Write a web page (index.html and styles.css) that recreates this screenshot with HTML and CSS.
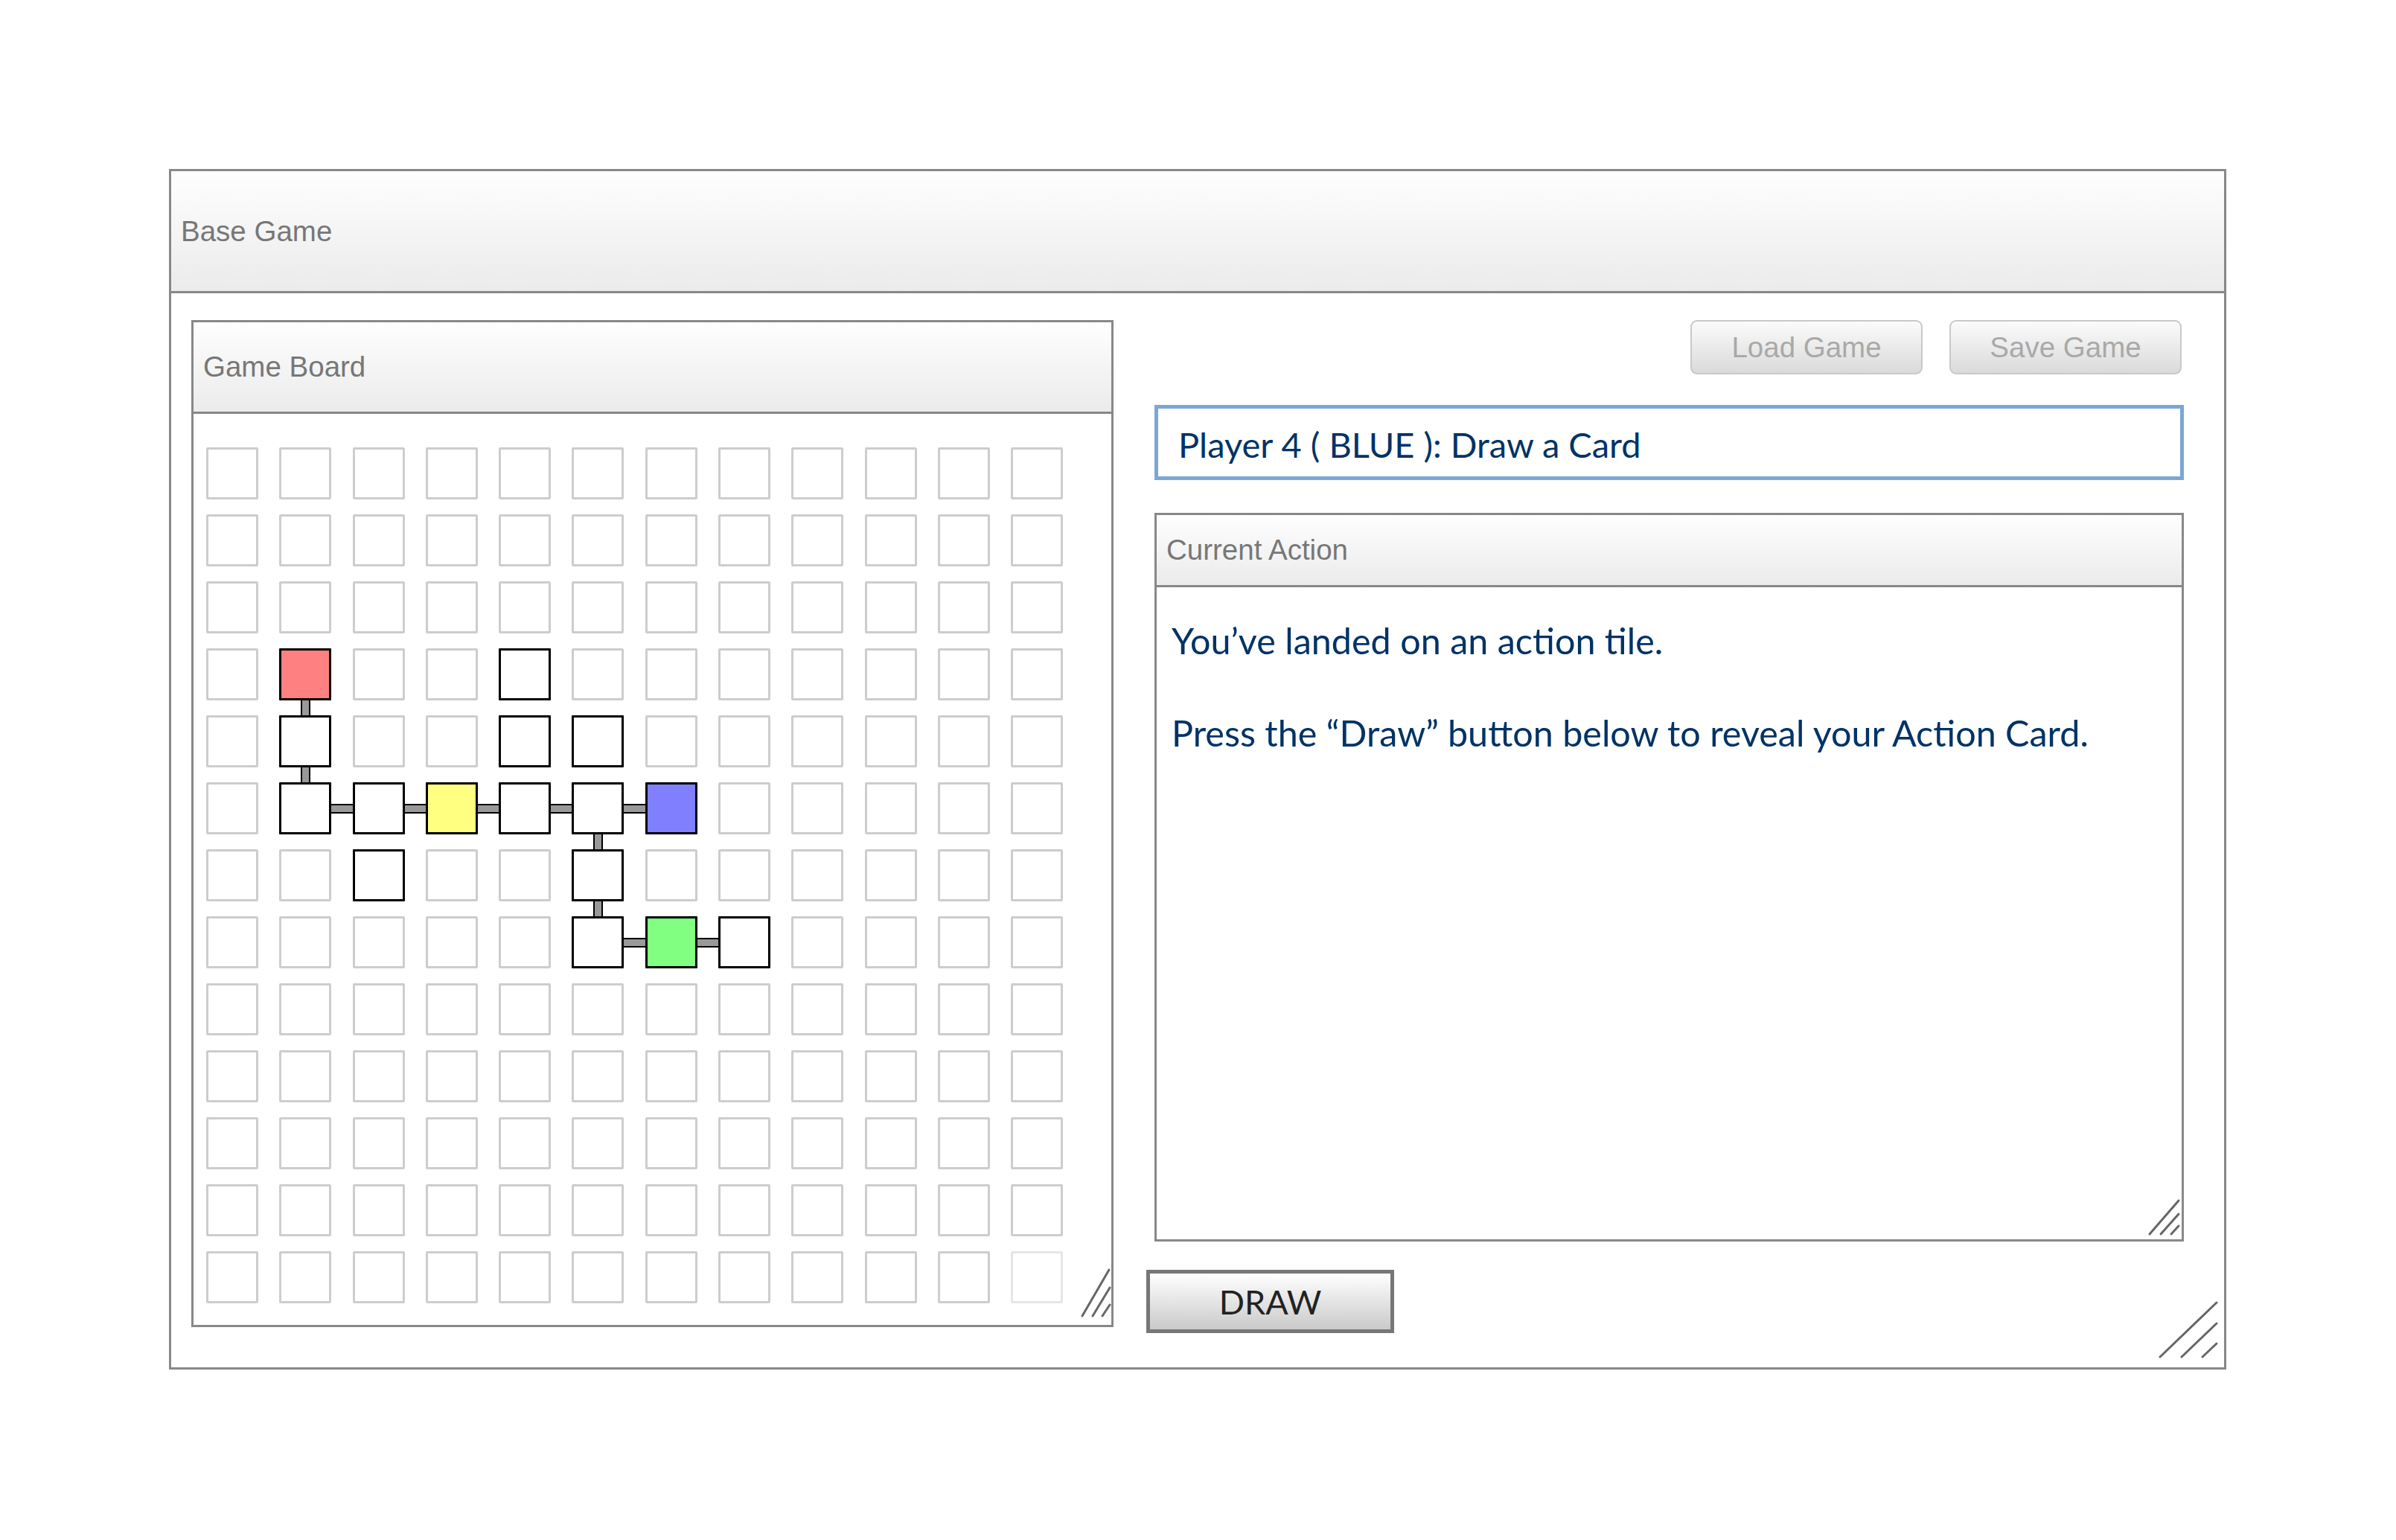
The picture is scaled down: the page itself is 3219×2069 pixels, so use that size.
FILE: index.html
```html
<!DOCTYPE html>
<html lang="en">
<head>
<meta charset="utf-8">
<title>Base Game</title>
<link rel="stylesheet" href="styles.css">
</head>
<body>
<div class="page">
  <div class="window">
    <div class="window-header">Base Game</div>
    <div class="window-body">
      <section class="panel board-panel">
        <div class="panel-header board-header">Game Board</div>
        <div class="board">
          <div class="c"></div><div class="c"></div><div class="c"></div><div class="c"></div><div class="c"></div><div class="c"></div><div class="c"></div><div class="c"></div><div class="c"></div><div class="c"></div><div class="c"></div><div class="c"></div>
          <div class="c"></div><div class="c"></div><div class="c"></div><div class="c"></div><div class="c"></div><div class="c"></div><div class="c"></div><div class="c"></div><div class="c"></div><div class="c"></div><div class="c"></div><div class="c"></div>
          <div class="c"></div><div class="c"></div><div class="c"></div><div class="c"></div><div class="c"></div><div class="c"></div><div class="c"></div><div class="c"></div><div class="c"></div><div class="c"></div><div class="c"></div><div class="c"></div>
          <div class="c"></div><div class="c on red link-d"></div><div class="c"></div><div class="c"></div><div class="c on"></div><div class="c"></div><div class="c"></div><div class="c"></div><div class="c"></div><div class="c"></div><div class="c"></div><div class="c"></div>
          <div class="c"></div><div class="c on link-d"></div><div class="c"></div><div class="c"></div><div class="c on"></div><div class="c on"></div><div class="c"></div><div class="c"></div><div class="c"></div><div class="c"></div><div class="c"></div><div class="c"></div>
          <div class="c"></div><div class="c on link-r"></div><div class="c on link-r"></div><div class="c on yellow link-r"></div><div class="c on link-r"></div><div class="c on link-r link-d"></div><div class="c on blue"></div><div class="c"></div><div class="c"></div><div class="c"></div><div class="c"></div><div class="c"></div>
          <div class="c"></div><div class="c"></div><div class="c on"></div><div class="c"></div><div class="c"></div><div class="c on link-d"></div><div class="c"></div><div class="c"></div><div class="c"></div><div class="c"></div><div class="c"></div><div class="c"></div>
          <div class="c"></div><div class="c"></div><div class="c"></div><div class="c"></div><div class="c"></div><div class="c on link-r"></div><div class="c on green link-r"></div><div class="c on"></div><div class="c"></div><div class="c"></div><div class="c"></div><div class="c"></div>
          <div class="c"></div><div class="c"></div><div class="c"></div><div class="c"></div><div class="c"></div><div class="c"></div><div class="c"></div><div class="c"></div><div class="c"></div><div class="c"></div><div class="c"></div><div class="c"></div>
          <div class="c"></div><div class="c"></div><div class="c"></div><div class="c"></div><div class="c"></div><div class="c"></div><div class="c"></div><div class="c"></div><div class="c"></div><div class="c"></div><div class="c"></div><div class="c"></div>
          <div class="c"></div><div class="c"></div><div class="c"></div><div class="c"></div><div class="c"></div><div class="c"></div><div class="c"></div><div class="c"></div><div class="c"></div><div class="c"></div><div class="c"></div><div class="c"></div>
          <div class="c"></div><div class="c"></div><div class="c"></div><div class="c"></div><div class="c"></div><div class="c"></div><div class="c"></div><div class="c"></div><div class="c"></div><div class="c"></div><div class="c"></div><div class="c"></div>
          <div class="c"></div><div class="c"></div><div class="c"></div><div class="c"></div><div class="c"></div><div class="c"></div><div class="c"></div><div class="c"></div><div class="c"></div><div class="c"></div><div class="c"></div><div class="c faint"></div>
        </div>
        <svg class="grip board-grip" viewBox="0 0 44 72" width="44" height="72">
          <line x1="5" y1="68" x2="41" y2="6"/>
          <line x1="19" y1="68" x2="42" y2="30"/>
          <line x1="32" y1="68" x2="42" y2="53"/>
        </svg>
      </section>
      <div class="side">
        <div class="toolbar">
          <button class="tool-btn" type="button">Load Game</button>
          <button class="tool-btn" type="button">Save Game</button>
        </div>
        <div class="status">Player 4 ( BLUE ): Draw a Card</div>
        <section class="panel action-panel">
          <div class="panel-header action-header">Current Action</div>
          <div class="action-body">
            <p>You’ve landed on an action tile.</p>
            <p>Press the “Draw” button below to reveal your Action Card.</p>
          </div>
          <svg class="grip action-grip" viewBox="0 0 46 52" width="46" height="52">
            <line x1="4" y1="49" x2="43" y2="4"/>
            <line x1="19" y1="49" x2="43" y2="22"/>
            <line x1="33" y1="49" x2="43" y2="38"/>
          </svg>
        </section>
        <button class="draw-btn" type="button">DRAW</button>
      </div>
    </div>
    <svg class="grip window-grip" viewBox="0 0 90 85" width="90" height="85">
      <line x1="7" y1="78" x2="83" y2="5"/>
      <line x1="36" y1="78" x2="83" y2="33"/>
      <line x1="64" y1="78" x2="83" y2="60"/>
    </svg>
  </div>
</div>
</body>
</html>
```

FILE: styles.css
```css
body {
  margin: 0;
  background: #fff;
  font-family: "Liberation Sans", Arial, sans-serif;
}

.page {
  padding: 227px 0 0 227px;
}

.window {
  position: relative;
  box-sizing: border-box;
  width: 2764px;
  height: 1613px;
  border: 3px solid #888;
  display: flex;
  flex-direction: column;
  background: #fff;
}

.window-header {
  flex: none;
  box-sizing: border-box;
  height: 164px;
  border-bottom: 3px solid #888;
  background: linear-gradient(#fefefe, #ebebeb);
  display: flex;
  align-items: center;
  padding-left: 13px;
  font-size: 38.5px;
  color: #777;
}

.window-body {
  display: flex;
  align-items: flex-start;
  gap: 44px;
  padding: 36px 54px 0 27px;
}

.panel {
  position: relative;
  box-sizing: border-box;
  border: 3px solid #888;
  background: #fff;
}

.panel-header {
  box-sizing: border-box;
  border-bottom: 3px solid #888;
  background: linear-gradient(#fefefe, #ebebeb);
  display: flex;
  align-items: center;
  padding-left: 13px;
  font-size: 38.5px;
  color: #777;
}

.board-panel {
  flex: none;
  width: 1239px;
  height: 1353px;
}

.board-header {
  height: 123px;
}

.board {
  display: grid;
  grid-template-columns: repeat(12, 70px);
  grid-auto-rows: 70px;
  column-gap: 28.3px;
  row-gap: 20px;
  padding: 45px 0 0 17px;
}

.c {
  position: relative;
  box-sizing: border-box;
  border: 3px solid #cdcdcd;
  border-radius: 2px;
  background: #fff;
}

.c.faint {
  border-color: #e6e6e6;
}

.c.on {
  border-color: #000;
  border-radius: 1px;
}

.c.red { background: #ff8080; }
.c.yellow { background: #ffff80; }
.c.blue { background: #8080ff; }
.c.green { background: #80ff80; }

.link-r::after {
  content: "";
  position: absolute;
  left: 67px;
  top: 25.5px;
  width: 28.3px;
  height: 13px;
  box-sizing: border-box;
  background: #999;
  border-top: 2px solid #000;
  border-bottom: 2px solid #000;
}

.link-d::before {
  content: "";
  position: absolute;
  top: 67px;
  left: 25.5px;
  width: 13px;
  height: 20px;
  box-sizing: border-box;
  background: #999;
  border-left: 2px solid #000;
  border-right: 2px solid #000;
}

.side {
  flex: none;
  width: 1394px;
  display: flex;
  flex-direction: column;
  align-items: stretch;
}

.toolbar {
  display: flex;
  justify-content: flex-end;
  gap: 36px;
  padding-right: 3px;
}

.tool-btn {
  box-sizing: border-box;
  width: 312px;
  height: 73px;
  padding: 0;
  border: 2px solid #c9c9c9;
  border-radius: 9px;
  background: linear-gradient(#fbfbfb, #dadada);
  font-family: "Liberation Sans", Arial, sans-serif;
  font-size: 38.5px;
  color: #a9a9a9;
}

.status {
  box-sizing: border-box;
  height: 101px;
  margin: 41px 0 0 11px;
  border: 5px solid #7ba7d4;
  display: flex;
  align-items: center;
  padding: 4px 0 0 27px;
  font-family: Lato, "Open Sans", sans-serif;
  font-size: 47px;
  color: #003366;
}

.action-panel {
  height: 979px;
  margin: 44px 0 0 11px;
}

.action-header {
  height: 97px;
}

.action-body {
  padding: 40px 0 0 20px;
  font-family: Lato, "Open Sans", sans-serif;
  font-size: 48.5px;
  line-height: 62px;
  color: #003366;
}

.action-body p {
  margin: 0 0 62px;
}

.draw-btn {
  align-self: flex-start;
  box-sizing: border-box;
  width: 333px;
  height: 85px;
  margin-top: 38px;
  padding: 0;
  border: 5px solid #777;
  background: linear-gradient(#ffffff, #cacaca);
  font-family: Lato, "Open Sans", sans-serif;
  font-size: 45px;
  color: #222;
}

.grip {
  position: absolute;
  stroke: #666;
  stroke-width: 3;
  stroke-linecap: round;
  fill: none;
}

.board-grip {
  right: 0;
  bottom: 8px;
}

.action-grip {
  right: 1px;
  bottom: 4px;
}

.window-grip {
  right: 3px;
  bottom: 7px;
}
```
